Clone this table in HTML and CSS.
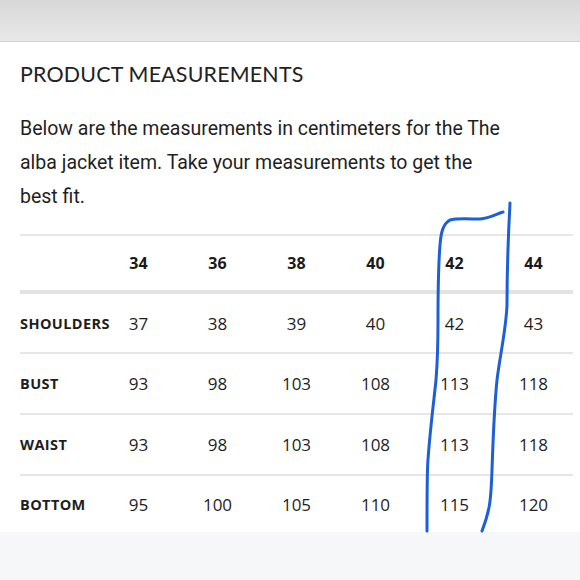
FILE: index.html
```html
<!DOCTYPE html>
<html>
<head>
<meta charset="utf-8">
<link rel="stylesheet" href="styles.css">
</head>
<body>
<div class="topbar"></div>
<main class="content">
  <h1 class="title">PRODUCT MEASUREMENTS</h1>
  <p class="intro">Below are the measurements in centimeters for the The alba jacket item. Take your measurements to get the best fit.</p>
  <table class="sizes">
    <thead>
      <tr><th></th><th>34</th><th>36</th><th>38</th><th>40</th><th>42</th><th>44</th></tr>
    </thead>
    <tbody>
      <tr><td class="label">SHOULDERS</td><td>37</td><td>38</td><td>39</td><td>40</td><td>42</td><td>43</td></tr>
      <tr><td class="label">BUST</td><td>93</td><td>98</td><td>103</td><td>108</td><td>113</td><td>118</td></tr>
      <tr><td class="label">WAIST</td><td>93</td><td>98</td><td>103</td><td>108</td><td>113</td><td>118</td></tr>
      <tr><td class="label">BOTTOM</td><td>95</td><td>100</td><td>105</td><td>110</td><td>115</td><td>120</td></tr>
    </tbody>
  </table>
</main>
<div class="bottombar"></div>
<svg class="scribble" width="580" height="580" viewBox="0 0 580 580">
  <path d="M427 531 C427 500 427 470 428 460 C430 430 434 400 436 380 C438 355 438 340 438 320 C438 300 438 270 440 245 C441 232 443 224 450 220 C456 218 470 219 480 219 C490 218 496 214 503 212" />
  <path d="M510 203 C508 240 507 280 507 305 C506 330 500 355 497 380 C494 410 493 440 492 470 C491 500 490 510 482 531" />
</svg>
</body>
</html>
```
FILE: styles.css
```css
html, body {
  margin: 0;
  padding: 0;
  background: #ffffff;
  width: 580px;
  height: 580px;
  overflow: hidden;
}
body {
  position: relative;
  font-family: "Lato", "Liberation Sans", sans-serif;
  color: #1c1c1c;
}
.topbar {
  height: 41px;
  background: linear-gradient(180deg, #d8d8d8 0%, #e8e8e8 100%);
  border-bottom: 1px solid #cfcfcf;
}
.content {
  padding: 0 8px 0 20px;
}
.title {
  margin: 18px 0 0;
  font-family: "Lato", sans-serif;
  font-weight: 400;
  font-size: 21.4px;
  line-height: 28px;
  letter-spacing: 0.2px;
  color: #222;
}
.intro {
  margin: 24px 0 0;
  max-width: 488px;
  font-family: "Roboto", sans-serif;
  font-size: 19.5px;
  line-height: 34px;
  color: #1f1f1f;
}
.sizes {
  margin-top: 20px;
  width: 553px;
  table-layout: fixed;
  border-collapse: collapse;
  font-family: "Open Sans", sans-serif;
}
.sizes th, .sizes td {
  padding: 0;
  text-align: center;
  white-space: nowrap;
}
.sizes thead tr {
  height: 57px;
  border-top: 2px solid #e8e8e8;
  border-bottom: 4px solid #e3e3e3;
}
.sizes th {
  font-size: 16px;
  font-weight: 700;
  color: #1a1a1a;
}
.sizes tbody tr {
  height: 61px;
  border-bottom: 2px solid #e6e6e6;
}
.sizes tbody tr:last-child {
  border-bottom: none;
  height: 57px;
}
.sizes td {
  font-size: 17px;
  color: #1e1e1e;
}
.sizes td.label {
  text-align: left;
  font-size: 14.5px;
  font-weight: 700;
  letter-spacing: 0.4px;
  overflow: visible;
}
.bottombar {
  height: 60px;
  background: #f6f7f9;
}
.scribble {
  position: absolute;
  left: 0;
  top: 0;
  pointer-events: none;
}
.scribble path {
  fill: none;
  stroke: #1d5fd6;
  stroke-width: 3;
  stroke-linecap: round;
  stroke-linejoin: round;
}
```
